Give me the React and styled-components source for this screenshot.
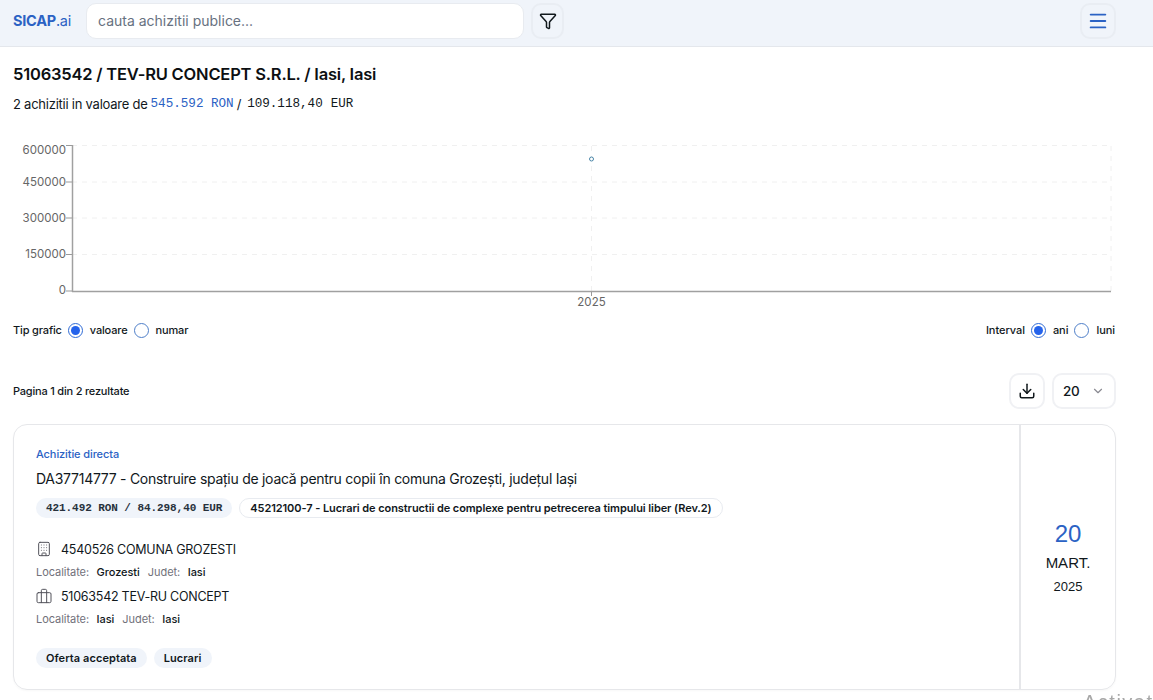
import React from 'react'
import styled, { createGlobalStyle } from 'styled-components'
import { Building, Download, ChevronDown, Menu, Filter } from 'lucide-react'

const GlobalStyle = createGlobalStyle`
  html, body {
    margin: 0;
    height: 700px;
    overflow: hidden;
    background: #fff;
    color: #11181c;
    font-family: Inter, "Liberation Sans", sans-serif;
  }
  * { box-sizing: border-box; }
`

const Navbar = styled.header`
  height: 47px;
  display: flex;
  align-items: center;
  padding: 0 37.5px 5px 13px;
  background: #f0f4fa;
  border-bottom: 1px solid #e4e7ec;
`

const Logo = styled.div`
  width: 73px;
  font-size: 14.5px;
  color: #2b62c4;
  letter-spacing: -0.25px;
  b { font-weight: 700; }
`

const Search = styled.div`
  width: 438px;
  height: 36px;
  display: flex;
  align-items: center;
  padding: 0 11px;
  background: #fff;
  border: 1px solid #e8ebf0;
  border-radius: 10px;
  font-size: 14px;
  color: #67717f;
`

const IconButton = styled.div`
  width: ${p => p.$size || 33}px;
  height: ${p => p.$size || 36}px;
  display: flex;
  align-items: center;
  justify-content: center;
  border: 2px solid ${p => p.$light ? '#f0f1f4' : '#e9edf3'};
  border-radius: 10px;
  background: ${p => p.$light ? '#fff' : 'transparent'};
  color: ${p => p.$color || '#11181c'};
`

const FilterButton = styled(IconButton)`
  margin-left: 7px;
`

const MenuButton = styled(IconButton)`
  margin-left: auto;
  width: 36px;
`

const Main = styled.main`
  padding: 0 37px 0 13px;
`

const Title = styled.h1`
  margin: 16px 0 0;
  font-size: 16.5px;
  line-height: 22px;
  font-weight: 600;
  letter-spacing: -0.2px;
  color: #0c0f12;
`

const Summary = styled.div`
  margin-top: 9px;
  display: flex;
  align-items: center;
  gap: 3px;
  height: 20px;
  font-size: 13px;
  letter-spacing: -0.24px;
`

const Mono = styled.span`
  font-family: "Liberation Mono", monospace;
  font-size: 12.6px;
  letter-spacing: 0;
  color: ${p => p.$blue ? '#2b62c4' : '#11181c'};
  white-space: pre;
`

const EurAmount = styled(Mono)`
  margin-left: 3px;
`

const Currency = styled.span`
  margin-left: 8px;
  font-size: 12.5px;
`

const ChartSvg = styled.svg`
  display: block;
  margin: 28px 0 0 -13px;
  width: 1153px;
  height: 167px;
  text {
    font-family: Inter, "Liberation Sans", sans-serif;
    font-size: 11.5px;
    fill: #666;
  }
`

const ControlRow = styled.div`
  margin-top: 11px;
  display: flex;
  justify-content: space-between;
  height: 20px;
`

const RadioGroup = styled.div`
  display: flex;
  align-items: center;
  font-size: 11px;
  font-weight: 500;
  letter-spacing: -0.15px;
  color: #11181c;
`

const IntervalGroup = styled(RadioGroup)`
  margin-right: 1px;
  letter-spacing: -0.05px;
`

const GroupLabel = styled.span`
  margin-right: 6px;
`

const RadioDot = styled.span`
  width: 15px;
  height: 15px;
  border-radius: 50%;
  border: 1.5px solid ${p => p.$on ? '#2f6bd6' : '#4f7fc9'};
  display: flex;
  align-items: center;
  justify-content: center;
  background: #fff;
  &::after {
    content: '';
    width: 9px;
    height: 9px;
    border-radius: 50%;
    background: ${p => p.$on ? '#2563eb' : 'transparent'};
  }
`

const RadioText = styled.span`
  margin: 0 6px 0 7px;
  &:last-child { margin-right: 0; }
`

const PageRow = styled.div`
  margin-top: 33px;
  height: 36px;
  display: flex;
  align-items: center;
  font-size: 11px;
  font-weight: 500;
  letter-spacing: -0.2px;
`

const PageActions = styled.div`
  margin-left: auto;
  display: flex;
  gap: 7px;
`

const PageSelect = styled.div`
  width: 64px;
  height: 36px;
  display: flex;
  align-items: center;
  justify-content: space-between;
  padding: 0 9px 0 9px;
  border: 2px solid #f0f1f4;
  border-radius: 10px;
  font-size: 13.5px;
  color: #8a8a92;
  span { color: #11181c; }
`

const Card = styled.article`
  margin-top: 15px;
  height: 266px;
  display: flex;
  border: 1px solid #e6e7ea;
  border-radius: 14px;
  box-shadow: 0 1px 2px rgba(0,0,0,0.03);
`

const CardBody = styled.div`
  flex: 1;
  padding: 22px 22px 0;
  min-width: 0;
`

const Kind = styled.div`
  height: 14px;
  font-size: 11px;
  line-height: 14px;
  font-weight: 500;
  letter-spacing: -0.1px;
  color: #2b62c4;
`

const CardTitle = styled.div`
  margin-top: 8px;
  height: 20px;
  font-size: 14px;
  line-height: 20px;
  letter-spacing: -0.27px;
  color: #11181c;
`

const ChipRow = styled.div`
  margin-top: 9px;
  display: flex;
  gap: 7px;
`

const Chip = styled.span`
  height: 20px;
  display: inline-flex;
  align-items: center;
  padding: 0 10px;
  border-radius: 10px;
  font-size: 11px;
  font-weight: 600;
  letter-spacing: -0.08px;
  white-space: nowrap;
  background: ${p => p.$outline ? '#fff' : '#f0f4fa'};
  border: ${p => p.$outline ? '1px solid #e8ebf0' : 'none'};
`

const ChipMono = styled(Mono)`
  font-size: 11px;
  font-weight: 700;
  letter-spacing: -0.07px;
  color: #27313c;
`

const Party = styled.div`
  display: flex;
  align-items: center;
  gap: 9px;
  height: 20px;
  margin-top: ${p => p.$first ? 21 : 7}px;
  font-size: 12.5px;
  letter-spacing: -0.25px;
  color: #11181c;
  svg { color: #52525b; flex: none; }
`

const Place = styled.div`
  display: flex;
  align-items: center;
  height: 14px;
  margin-top: 6px;
  font-size: 11px;
  font-weight: 500;
  letter-spacing: -0.05px;
`

const PlaceLabel = styled.span`
  color: #71717a;
  font-weight: 400;
  margin-right: 7.5px;
`

const PlaceValue = styled.span`
  color: #11181c;
  margin-right: 8px;
`

const Tags = styled.div`
  margin-top: 22px;
  display: flex;
  gap: 7px;
`

const Tag = styled(Chip)`
  letter-spacing: 0.07px;
`

const DateBox = styled.div`
  width: 96px;
  border-left: 2px solid #e6e7ea;
  display: flex;
  flex-direction: column;
  align-items: center;
  justify-content: center;
  font-family: "Liberation Sans", sans-serif;
`

const Day = styled.div`
  font-size: 24px;
  line-height: 30px;
  color: #2b62c4;
`

const Month = styled.div`
  margin-top: 4px;
  font-size: 15px;
  line-height: 20px;
  color: #11181c;
`

const Year = styled.div`
  margin-top: 5px;
  font-size: 13px;
  line-height: 18px;
  color: #11181c;
`

const Watermark = styled.div`
  position: fixed;
  left: 1083px;
  top: 691px;
  font-family: "Liberation Sans", sans-serif;
  font-size: 20px;
  letter-spacing: 1.5px;
  color: #a8a8a8;
  white-space: nowrap;
`

// y of each tick inside the svg; the top label sits lower than its tick
const ticks = [
  { y: 3.5, ly: 12, label: '600000' },
  { y: 40, ly: 44, label: '450000' },
  { y: 76, ly: 80, label: '300000' },
  { y: 112.5, ly: 116, label: '150000' },
  { y: 149, ly: 152, label: '0' },
]

function Chart() {
  return (
    <ChartSvg viewBox="0 0 1153 167">
      {ticks.map(t => (
        <g key={t.label}>
          {t.y !== 149 && <line x1="72" x2="1111" y1={t.y} y2={t.y} stroke="#f0f0f0" strokeDasharray="5 5" />}
          <line x1="66" x2="72" y1={t.y} y2={t.y} stroke="#999" />
          <text x="66" y={t.ly} textAnchor="end">{t.label}</text>
        </g>
      ))}
      <line x1="591.5" x2="591.5" y1="4" y2="149" stroke="#f0f0f0" strokeDasharray="5 5" />
      <line x1="1111" x2="1111" y1="4" y2="149" stroke="#f0f0f0" strokeDasharray="5 5" />
      <line x1="72.5" x2="72.5" y1="3" y2="150" stroke="#a0a0a0" strokeWidth="1.5" />
      <line x1="72" x2="1111" y1="149.5" y2="149.5" stroke="#a0a0a0" strokeWidth="1.5" />
      <line x1="591.5" x2="591.5" y1="150" y2="154" stroke="#999" />
      <text x="591.5" y="164" textAnchor="middle">2025</text>
      <circle cx="591.5" cy="17" r="2" fill="#fff" stroke="#4a86a8" strokeWidth="1" />
    </ChartSvg>
  )
}

function BriefcaseIcon() {
  return (
    <svg width="16" height="16" viewBox="0 0 24 24" fill="none" stroke="currentColor" strokeWidth="1.5" strokeLinecap="round" strokeLinejoin="round">
      <rect x="1.5" y="7" width="21" height="15" rx="2" />
      <path d="M16 22V4a2 2 0 0 0-2-2h-4a2 2 0 0 0-2 2v18" />
    </svg>
  )
}

function Radio({ on, children }) {
  return (
    <>
      <RadioDot $on={on} />
      <RadioText>{children}</RadioText>
    </>
  )
}

export default function App() {
  return (
    <>
      <GlobalStyle />
      <Navbar>
        <Logo><b>SICAP</b>.ai</Logo>
        <Search>cauta achizitii publice...</Search>
        <FilterButton><Filter size={18} strokeWidth={2} /></FilterButton>
        <MenuButton $color="#2b62c4"><Menu size={22} strokeWidth={2} /></MenuButton>
      </Navbar>
      <Main>
        <Title>51063542 / TEV-RU CONCEPT S.R.L. / Iasi, Iasi</Title>
        <Summary>
          2 achizitii in valoare de <Mono $blue>545.592 RON</Mono> / <EurAmount>109.118,40<Currency>EUR</Currency></EurAmount>
        </Summary>
        <Chart />
        <ControlRow>
          <RadioGroup>
            <GroupLabel>Tip grafic</GroupLabel>
            <Radio on>valoare</Radio>
            <Radio>numar</Radio>
          </RadioGroup>
          <IntervalGroup>
            <GroupLabel>Interval</GroupLabel>
            <Radio on>ani</Radio>
            <Radio>luni</Radio>
          </IntervalGroup>
        </ControlRow>
        <PageRow>
          Pagina 1 din 2 rezultate
          <PageActions>
            <IconButton $size={36} $light><Download size={18} strokeWidth={2} /></IconButton>
            <PageSelect><span>20</span><ChevronDown size={14} /></PageSelect>
          </PageActions>
        </PageRow>
        <Card>
          <CardBody>
            <Kind>Achizitie directa</Kind>
            <CardTitle>DA37714777 - Construire spațiu de joacă pentru copii în comuna Grozești, județul Iași</CardTitle>
            <ChipRow>
              <Chip><ChipMono>421.492 RON / 84.298,40 EUR</ChipMono></Chip>
              <Chip $outline>45212100-7 - Lucrari de constructii de complexe pentru petrecerea timpului liber (Rev.2)</Chip>
            </ChipRow>
            <Party $first><Building size={16} strokeWidth={1.5} />4540526 COMUNA GROZESTI</Party>
            <Place>
              <PlaceLabel>Localitate:</PlaceLabel><PlaceValue>Grozesti</PlaceValue>
              <PlaceLabel>Judet:</PlaceLabel><PlaceValue>Iasi</PlaceValue>
            </Place>
            <Party><BriefcaseIcon />51063542 TEV-RU CONCEPT</Party>
            <Place>
              <PlaceLabel>Localitate:</PlaceLabel><PlaceValue>Iasi</PlaceValue>
              <PlaceLabel>Judet:</PlaceLabel><PlaceValue>Iasi</PlaceValue>
            </Place>
            <Tags>
              <Tag>Oferta acceptata</Tag>
              <Tag>Lucrari</Tag>
            </Tags>
          </CardBody>
          <DateBox>
            <Day>20</Day>
            <Month>MART.</Month>
            <Year>2025</Year>
          </DateBox>
        </Card>
      </Main>
      <Watermark>Activati</Watermark>
    </>
  )
}
